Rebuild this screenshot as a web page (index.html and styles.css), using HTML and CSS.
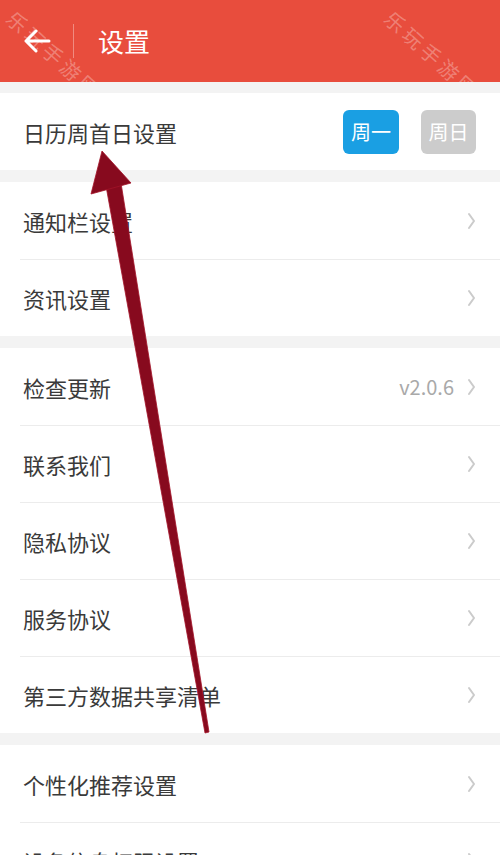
FILE: index.html
```html
<!DOCTYPE html>
<html>
<head>
  <meta charset="utf-8">
  <title>设置</title>
  <link rel="stylesheet" href="styles.css">
</head>
<body>
<div class="header">
  <svg class="back" width="28" height="24" viewBox="0 0 28 24">
    <path d="M26 12 H3 M13 2 L3 12 L13 22" fill="none" stroke="#fff" stroke-width="3" stroke-linecap="round" stroke-linejoin="round"/>
  </svg>
  <span class="divider"></span>
  <span class="title">设置</span>
  <span class="mark markLeft">乐玩手游网</span>
  <span class="mark markRight">乐玩手游网</span>
</div>

<div class="group">
  <div class="row">
    <span class="label">日历周首日设置</span>
    <span class="btn active">周一</span>
    <span class="btn">周日</span>
  </div>
</div>

<div class="group">
  <div class="row"><span class="label">通知栏设置</span><svg class="chev" width="9" height="18" viewBox="0 0 9 18"><path d="M2 2 L7 9 L2 16" fill="none" stroke="#cbcbcb" stroke-width="2" stroke-linecap="round" stroke-linejoin="round"/></svg></div>
  <div class="row"><span class="label">资讯设置</span><svg class="chev" width="9" height="18" viewBox="0 0 9 18"><path d="M2 2 L7 9 L2 16" fill="none" stroke="#cbcbcb" stroke-width="2" stroke-linecap="round" stroke-linejoin="round"/></svg></div>
</div>

<div class="group">
  <div class="row"><span class="label">检查更新</span><span class="value">v2.0.6</span><svg class="chev" width="9" height="18" viewBox="0 0 9 18"><path d="M2 2 L7 9 L2 16" fill="none" stroke="#cbcbcb" stroke-width="2" stroke-linecap="round" stroke-linejoin="round"/></svg></div>
  <div class="row"><span class="label">联系我们</span><svg class="chev" width="9" height="18" viewBox="0 0 9 18"><path d="M2 2 L7 9 L2 16" fill="none" stroke="#cbcbcb" stroke-width="2" stroke-linecap="round" stroke-linejoin="round"/></svg></div>
  <div class="row"><span class="label">隐私协议</span><svg class="chev" width="9" height="18" viewBox="0 0 9 18"><path d="M2 2 L7 9 L2 16" fill="none" stroke="#cbcbcb" stroke-width="2" stroke-linecap="round" stroke-linejoin="round"/></svg></div>
  <div class="row"><span class="label">服务协议</span><svg class="chev" width="9" height="18" viewBox="0 0 9 18"><path d="M2 2 L7 9 L2 16" fill="none" stroke="#cbcbcb" stroke-width="2" stroke-linecap="round" stroke-linejoin="round"/></svg></div>
  <div class="row"><span class="label">第三方数据共享清单</span><svg class="chev" width="9" height="18" viewBox="0 0 9 18"><path d="M2 2 L7 9 L2 16" fill="none" stroke="#cbcbcb" stroke-width="2" stroke-linecap="round" stroke-linejoin="round"/></svg></div>
</div>

<div class="group">
  <div class="row"><span class="label">个性化推荐设置</span><svg class="chev" width="9" height="18" viewBox="0 0 9 18"><path d="M2 2 L7 9 L2 16" fill="none" stroke="#cbcbcb" stroke-width="2" stroke-linecap="round" stroke-linejoin="round"/></svg></div>
  <div class="row"><span class="label">设备信息权限设置</span><svg class="chev" width="9" height="18" viewBox="0 0 9 18"><path d="M2 2 L7 9 L2 16" fill="none" stroke="#cbcbcb" stroke-width="2" stroke-linecap="round" stroke-linejoin="round"/></svg></div>
</div>

<!-- annotation arrow drawn over the screenshot -->
<svg class="pointer" width="500" height="855" viewBox="0 0 500 855">
  <polygon points="106,186 121,183 209,732 205,733" fill="#870a1e" stroke="#a3142a" stroke-width="0.8"/>
  <polygon points="102,151 91,194 131,183" fill="#870a1e" stroke="#a3142a" stroke-width="0.8"/>
</svg>
</body>
</html>
```

FILE: styles.css
```css
body {
    margin: 0;
    background: #f3f3f3;
    font-family: "Noto Sans CJK SC", "Noto Sans", sans-serif;
    color: #3a3a3a;
    position: relative;
    height: 855px;
    overflow: hidden;
}
.header {
    position: relative;
    height: 82px;
    background: #e84d3d;
    display: flex;
    align-items: center;
    padding-left: 23px;
    overflow: hidden;
    margin-bottom: 11px;
}
.back {
    display: block;
}
.divider {
    width: 1px;
    height: 34px;
    margin-left: 22px;
    background: rgba(255, 255, 255, 0.35);
}
.title {
    margin-left: 24px;
    color: #fff;
    font-size: 26px;
    line-height: 1;
}
.mark {
    position: absolute;
    color: rgba(255, 255, 255, 0.3);
    font-size: 20px;
    letter-spacing: 4px;
    transform: rotate(42deg);
    transform-origin: 0 0;
    white-space: nowrap;
}
.markLeft {
    left: 20px;
    top: 4px;
}
.markRight {
    left: 398px;
    top: 4px;
}
.group {
    background: #fff;
    margin-bottom: 12px;
}
.row {
    height: 77px;
    margin-left: 20px;
    padding: 0 24px 0 3px;
    display: flex;
    align-items: center;
    box-sizing: border-box;
}
.row + .row {
    border-top: 1px solid #ececec;
}
.label {
    flex: 1;
    font-size: 22px;
}
.value {
    font-size: 20px;
    color: #a9a9a9;
    margin-right: 13px;
}
.chev {
    display: block;
}
.btn {
    width: 55px;
    height: 44px;
    border-radius: 6px;
    background: #cccccc;
    color: #fff;
    font-size: 20px;
    display: flex;
    align-items: center;
    justify-content: center;
    margin-left: 22px;
}
.btn.active {
    background: #1a9fe3;
    width: 56px;
}
.pointer {
    position: absolute;
    left: 0;
    top: 0;
    pointer-events: none;
}
```
